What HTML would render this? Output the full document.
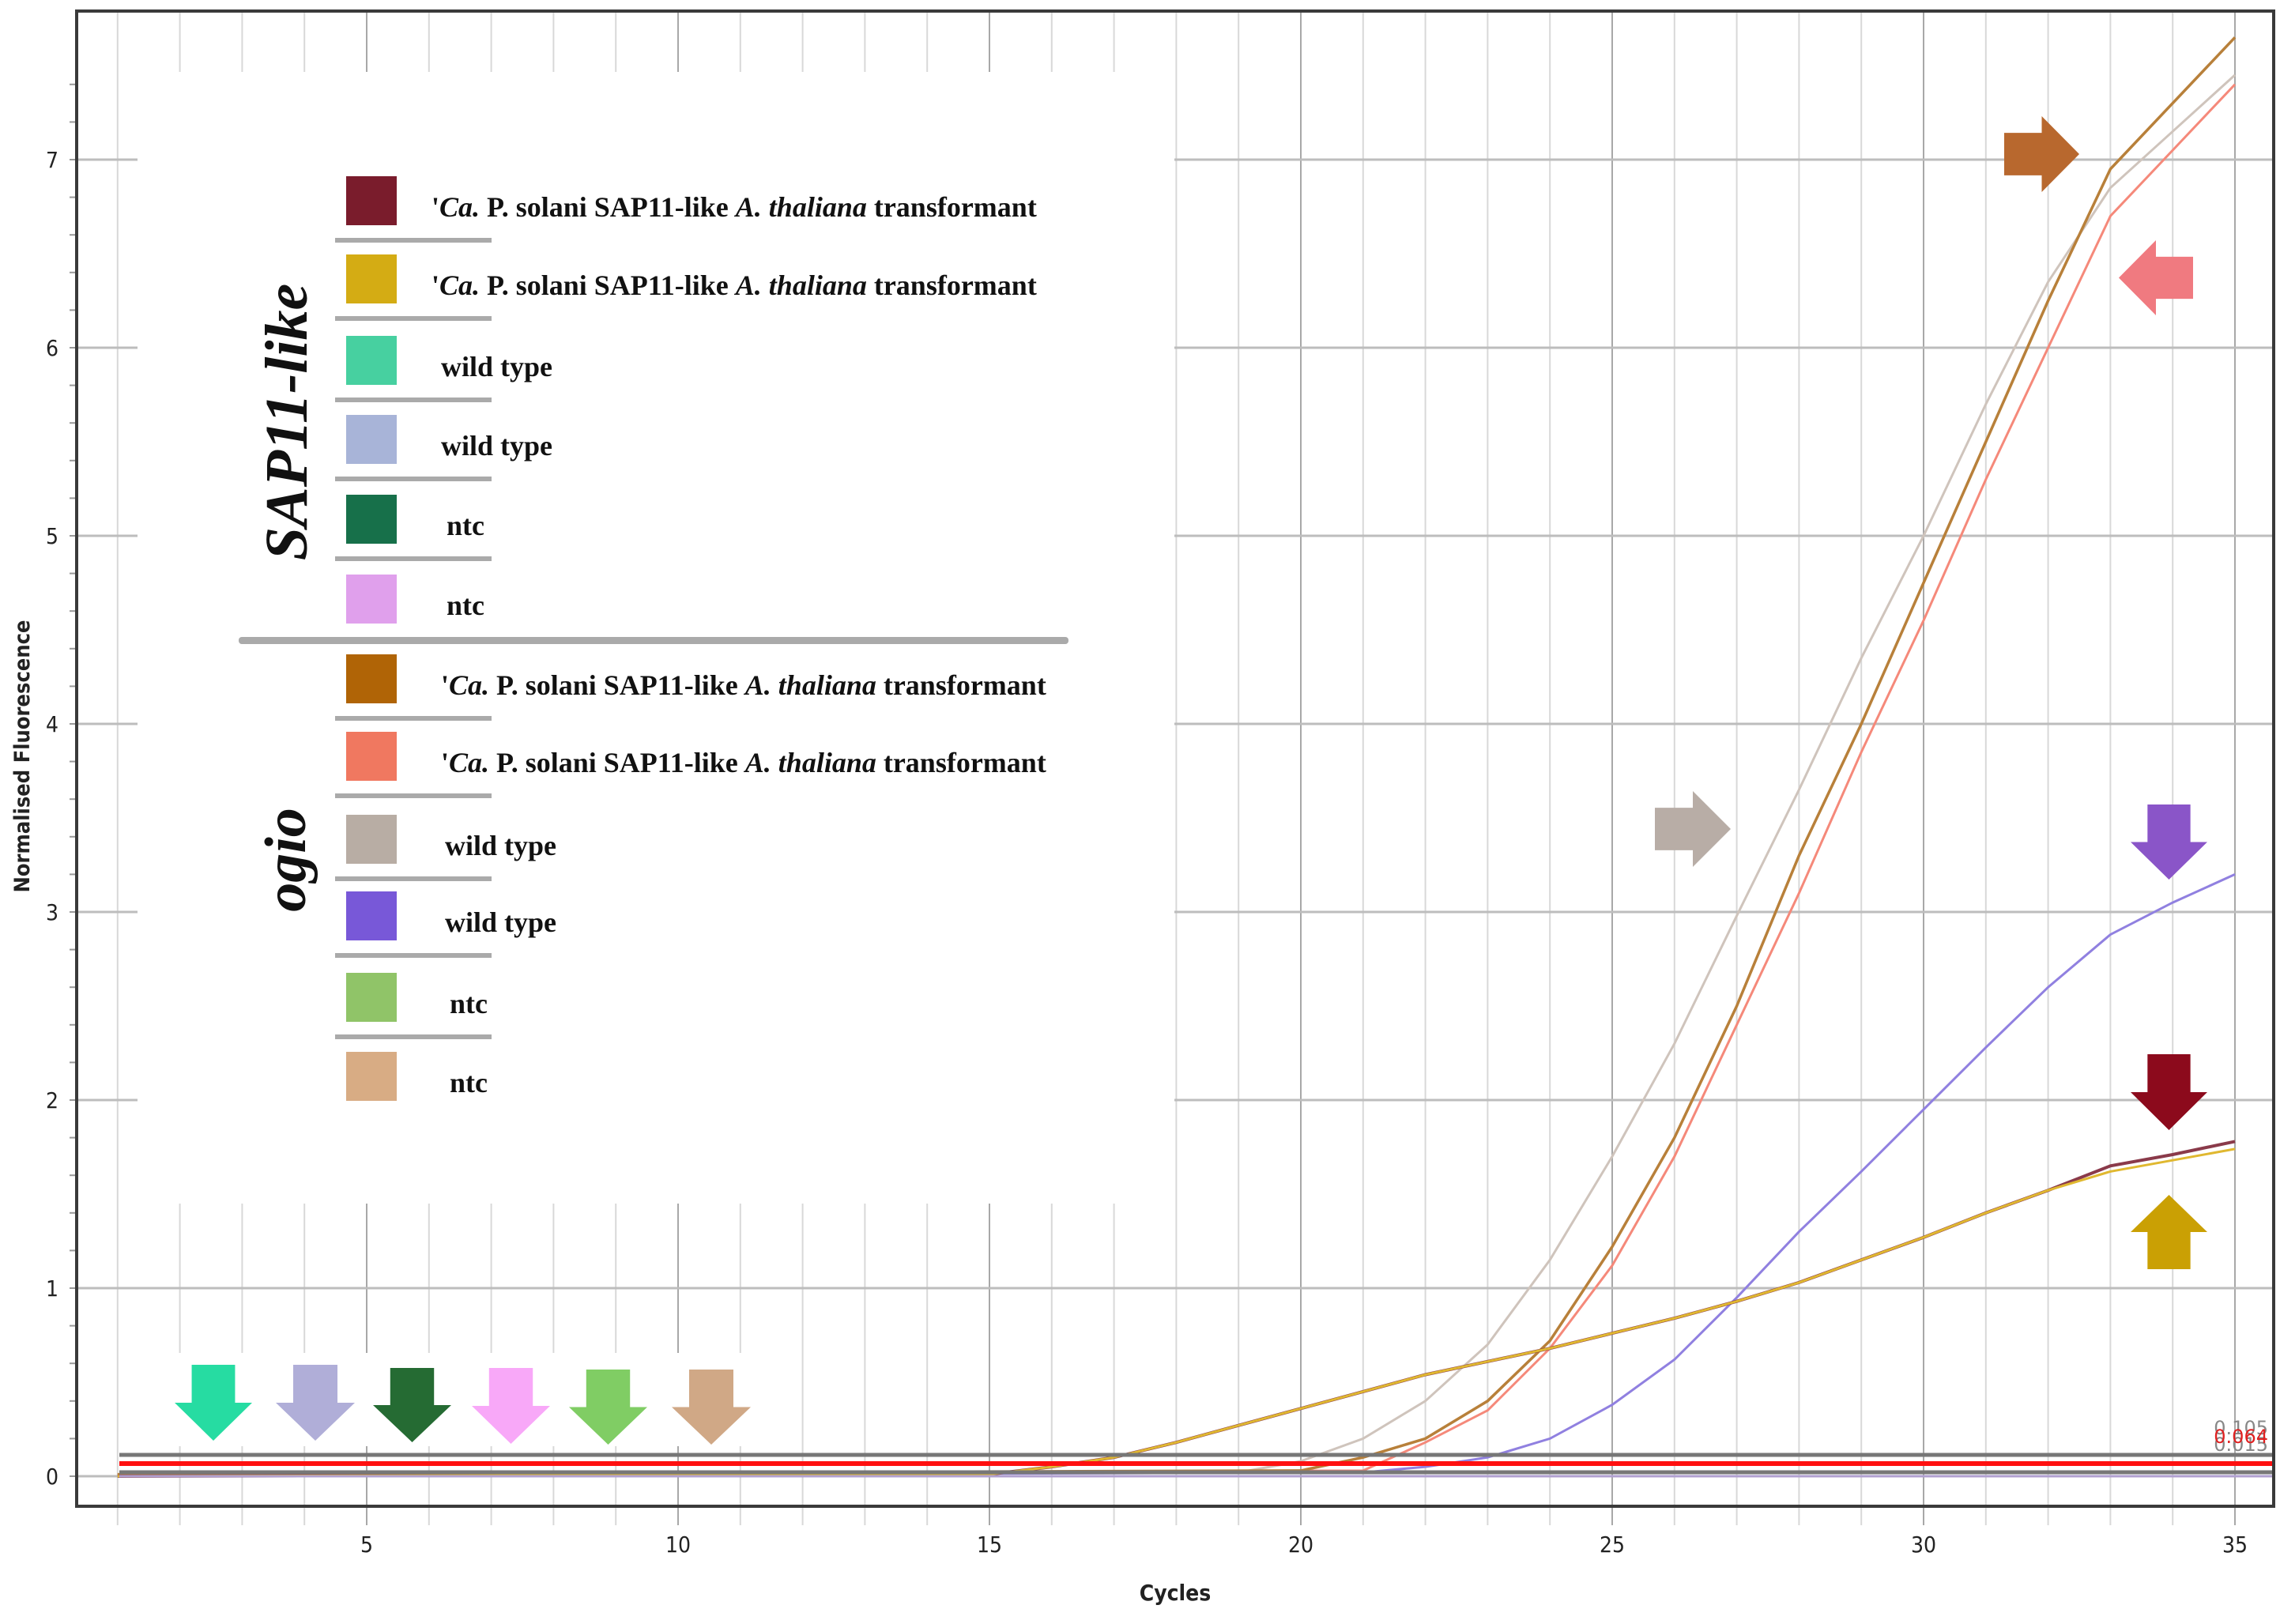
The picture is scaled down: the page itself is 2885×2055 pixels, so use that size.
<!DOCTYPE html>
<html><head><meta charset="utf-8">
<style>
html,body{margin:0;padding:0;background:#fff;width:2885px;height:2055px;overflow:hidden}
svg{display:block}
.lg{font-family:"Liberation Serif",serif;font-weight:bold;font-size:36px;fill:#111}
.ax{font-family:"DejaVu Sans Condensed","DejaVu Sans","Liberation Sans",sans-serif;font-size:28px;fill:#222}
</style></head><body>
<svg id="s" width="2885" height="2055" viewBox="0 0 2885 2055" xmlns="http://www.w3.org/2000/svg">
<rect width="2885" height="2055" fill="#fff"/>
<g id="grid"></g>
<g id="curves"></g>
<rect x="174" y="91" width="1312" height="1432" fill="#fff"/>
<rect x="205" y="1712" width="760" height="118" fill="#fff"/>
<g id="thr"></g>
<rect x="97" y="14" width="2780" height="1892" fill="none" stroke="#3a3a3a" stroke-width="4"/>
<text class="ax" x="37" y="957" transform="rotate(-90 37 957)" text-anchor="middle" font-weight="bold" style="font-size:27px">Normalised Fluorescence</text>
<text class="ax" x="1487" y="2025" text-anchor="middle" font-weight="bold">Cycles</text>
<g id="lab"></g>
<g id="leg"></g>
<rect x="302" y="806" width="1050" height="9" rx="4" fill="#aaa"/>
<text x="388" y="534" transform="rotate(-90 388 534)" text-anchor="middle" style="font-family:'Liberation Serif',serif;font-style:italic;font-weight:bold;font-size:76px;fill:#111">SAP11-like</text>
<text x="386" y="1088" transform="rotate(-90 386 1088)" text-anchor="middle" style="font-family:'Liberation Serif',serif;font-style:italic;font-weight:bold;font-size:74px;fill:#111">ogio</text>
<g id="arr"></g>
<text x="2870" y="1815" text-anchor="end" style="font-family:'DejaVu Sans',sans-serif;font-size:24px;fill:#888">0.105</text>
<text x="2870" y="1836" text-anchor="end" style="font-family:'DejaVu Sans',sans-serif;font-size:24px;fill:#888">0.015</text>
<text x="2870" y="1826" text-anchor="end" style="font-family:'DejaVu Sans',sans-serif;font-size:24px;fill:#e02020">0.064</text>
</svg>
<script>
var NS="http://www.w3.org/2000/svg";
function X(c){return 464+78.8*(c-5);}
function Y(v){return 1868-238*v;}
function el(p,t,a,txt){var e=document.createElementNS(NS,t);for(var k in a)e.setAttribute(k,a[k]);if(txt!=null)e.textContent=txt;document.getElementById(p).appendChild(e);return e;}
for(var c=1;c<=35;c++){var x=X(c);var maj=c%5==0;
 el("grid","line",{x1:x,y1:14,x2:x,y2:1930,stroke:maj?"#a8a8a8":"#d8d8d8","stroke-width":2});}
for(var v=0;v<=7;v++){el("grid","line",{x1:97,y1:Y(v),x2:2877,y2:Y(v),stroke:"#bdbdbd","stroke-width":3});
 el("lab","text",{"class":"ax",x:66,y:Y(v)+10,"text-anchor":"middle"},String(v));}
for(var v=0;v<7.6;v+=0.2){el("grid","line",{x1:88,y1:Y(v),x2:97,y2:Y(v),stroke:"#999","stroke-width":2});}
[5,10,15,20,25,30,35].forEach(function(c){el("lab","text",{"class":"ax",x:X(c),y:1964,"text-anchor":"middle"},String(c));});
el("thr","line",{x1:151,y1:1841,x2:2877,y2:1841,stroke:"#777","stroke-width":5});
el("thr","line",{x1:151,y1:1863,x2:2877,y2:1863,stroke:"#777","stroke-width":5});
el("thr","line",{x1:151,y1:1852,x2:2877,y2:1852,stroke:"#ff1010","stroke-width":6});
el("thr","line",{x1:151,y1:1868,x2:2877,y2:1868,stroke:"#b0a0d0","stroke-width":3});
function curve(pts,col,w){var d="";pts.forEach(function(p,i){d+=(i?"L":"M")+X(p[0]).toFixed(1)+","+Y(p[1]).toFixed(1);});
 el("curves","path",{d:d,fill:"none",stroke:col,"stroke-width":w||3});}
curve([[1,0.01],[19,0.02],[20,0.08],[21,0.2],[22,0.4],[23,0.7],[24,1.15],[25,1.7],[26,2.3],[27,2.98],[28,3.65],[29,4.35],[30,5.0],[31,5.7],[32,6.35],[33,6.85],[34,7.15],[35,7.45]],"#cfc4bc",3);
curve([[1,0.01],[21,0.03],[22,0.18],[23,0.35],[24,0.68],[25,1.12],[26,1.7],[27,2.4],[28,3.1],[29,3.85],[30,4.55],[31,5.3],[32,6.0],[33,6.7],[34,7.05],[35,7.4]],"#f5897a",3);
curve([[1,0.01],[20,0.03],[21,0.1],[22,0.2],[23,0.4],[24,0.72],[25,1.22],[26,1.8],[27,2.5],[28,3.3],[29,4.0],[30,4.75],[31,5.5],[32,6.25],[33,6.95],[34,7.3],[35,7.65]],"#b8803a",3.5);
curve([[1,0.0],[21,0.02],[22,0.05],[23,0.1],[24,0.2],[25,0.38],[26,0.62],[27,0.95],[28,1.3],[29,1.62],[30,1.95],[31,2.28],[32,2.6],[33,2.88],[34,3.05],[35,3.2]],"#9080e0",3);
var base=[[1,0.0],[15,0.01],[16,0.05],[17,0.1],[18,0.18],[19,0.27],[20,0.36],[21,0.45],[22,0.54],[23,0.61],[24,0.68],[25,0.76],[26,0.84],[27,0.93],[28,1.03],[29,1.15],[30,1.27],[31,1.4],[32,1.52]];
curve(base.concat([[33,1.65],[34,1.71],[35,1.78]]),"#8a3a4a",4);
curve(base.concat([[33,1.62],[34,1.68],[35,1.74]]),"#e0b830",3);
var rows=[["#7a1c2c","T",546],["#d4ac14","T",546],["#47d0a0","wild type",558],["#a8b4d8","wild type",558],["#17704a","ntc",565],["#e0a0ec","ntc",565],
["#b06406","T",558],["#f07860","T",558],["#b8ada4","wild type",563],["#7858d8","wild type",563],["#90c468","ntc",569],["#d8ac84","ntc",569]];
var ys=[254,353,456,556,657,758,859,957,1062,1159,1262,1362];
rows.forEach(function(r,i){var y=ys[i];
 el("leg","rect",{x:438,y:y-31,width:64,height:62,fill:r[0]});
 var t=el("leg","text",{"class":"lg",x:r[2],y:y+20});
 if(r[1]=="T"){t.innerHTML="'<tspan font-style='italic'>Ca.</tspan> P. solani SAP11-like <tspan font-style='italic'>A. thaliana</tspan> transformant";}
 else t.textContent=r[1];
 if(i!=5&&i!=11) el("leg","rect",{x:424,y:y+47,width:198,height:6,fill:"#aaa"});
});
function arrow(x0,y0,w,h,dir,col){
 var d="M22,0H78V50H100L50,100L0,50H22Z";
 var tr="translate("+x0+","+y0+") scale("+(w/100)+","+(h/100)+")";
 var rot={down:"",up:"rotate(180 50 50)",right:"rotate(-90 50 50)",left:"rotate(90 50 50)"}[dir];
 el("arr","path",{d:d,fill:col,transform:tr+" "+rot});}
arrow(2536,147,95,96,"right","#b8682e");
arrow(2681,304,94,95,"left","#f07a80");
arrow(2094,1001,96,96,"right","#b8ada6");
arrow(2696,1018,97,95,"down","#8a55c8");
arrow(2696,1334,97,96,"down","#8c0a1c");
arrow(2696,1512,97,94,"up","#caa004");
arrow(221,1727,98,96,"down","#26dca2");
arrow(349,1727,100,96,"down","#b0aed8");
arrow(472,1731,99,94,"down","#256b33");
arrow(597,1731,99,96,"down","#f8a8f8");
arrow(720,1733,99,95,"down","#80cd64");
arrow(850,1733,100,95,"down","#d0a886");
</script>
</body></html>
